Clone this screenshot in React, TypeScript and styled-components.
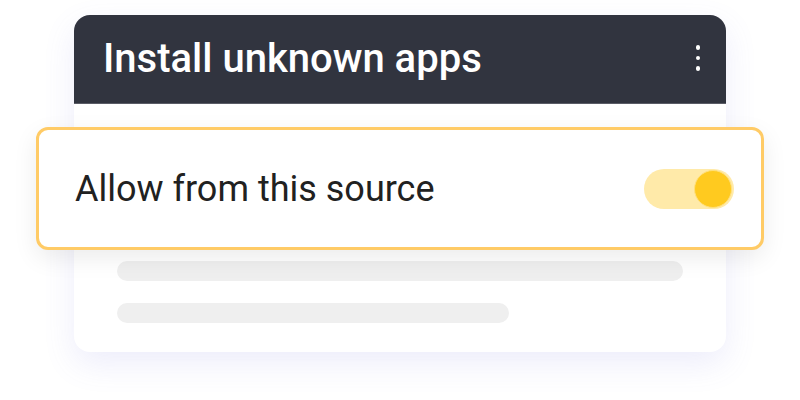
import React from "react";
import styled, { createGlobalStyle } from "styled-components";

const GlobalStyle = createGlobalStyle`
  html, body { margin: 0; padding: 0; background: #ffffff; }
  body { font-family: Roboto, "Noto Sans", Arial, sans-serif; }
  * { box-sizing: border-box; }
`;

const Page = styled.div`
  width: 800px;
  height: 400px;
  padding: 15px 74px 0;
`;

const Card = styled.div`
  width: 652px;
  height: 337px;
  background: #ffffff;
  border-radius: 16px;
  box-shadow: 0 12px 32px rgba(110, 110, 220, 0.12);
  display: flex;
  flex-direction: column;
`;

const Header = styled.div`
  height: 89px;
  background: #31343f;
  border-radius: 16px 16px 0 0;
  border-bottom: 1px solid #5a5c66;
  display: flex;
  align-items: center;
  justify-content: space-between;
  padding: 0 26px 2px 29px;
`;

const Title = styled.h1`
  margin: 0;
  color: #ffffff;
  font-size: 40px;
  font-weight: 500;
  letter-spacing: 0;
`;

const Kebab = styled.div`
  display: flex;
  flex-direction: column;
  gap: 6px;
  align-items: center;
`;

const Dot = styled.span`
  width: 4.5px;
  height: 4.5px;
  border-radius: 50%;
  background: #ffffff;
`;

const Body = styled.div`
  padding: 23px 0 0;
  display: flex;
  flex-direction: column;
`;

const Highlight = styled.div`
  margin: 0 -38px;
  height: 123px;
  background: #ffffff;
  border: 3px solid #ffcb66;
  border-radius: 12px;
  box-shadow: 0 8px 24px rgba(0, 0, 0, 0.08);
  display: flex;
  align-items: center;
  justify-content: space-between;
  padding: 0 27px 0 36px;
  position: relative;
  z-index: 1;
`;

const Label = styled.span`
  color: #212121;
  font-size: 36px;
  font-weight: 400;
`;

const Track = styled.div`
  width: 90px;
  height: 40px;
  border-radius: 20px;
  background: #ffeaa9;
  display: flex;
  align-items: center;
  justify-content: flex-end;
  padding-right: 2px;
`;

const Knob = styled.div`
  width: 38px;
  height: 38px;
  border-radius: 50%;
  background: #ffca1f;
  border: 1px solid #ffe07a;
`;

const Bars = styled.div`
  padding: 11px 43px 0;
  display: flex;
  flex-direction: column;
  gap: 22px;
`;

const Bar = styled.div<{ $width: number }>`
  width: ${(p) => p.$width}px;
  height: 20px;
  border-radius: 10px;
  background: #efefef;
`;

export default function App() {
  return (
    <>
      <GlobalStyle />
      <Page>
        <Card>
          <Header>
            <Title>Install unknown apps</Title>
            <Kebab>
              <Dot />
              <Dot />
              <Dot />
            </Kebab>
          </Header>
          <Body>
            <Highlight>
              <Label>Allow from this source</Label>
              <Track>
                <Knob />
              </Track>
            </Highlight>
            <Bars>
              <Bar $width={566} />
              <Bar $width={392} />
            </Bars>
          </Body>
        </Card>
      </Page>
    </>
  );
}
